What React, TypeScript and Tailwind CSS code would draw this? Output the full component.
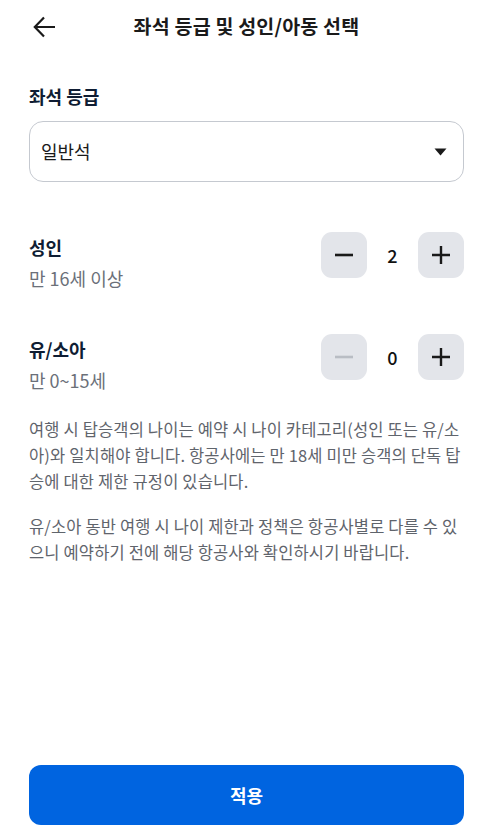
import { useState } from "react";

const font = { fontFamily: '"Noto Sans CJK KR", "Noto Sans", sans-serif' };

function Stepper({ value, min, onChange }: { value: number; min: number; onChange: (v: number) => void }) {
  const disabled = value <= min;
  return (
    <div className="flex items-center">
      <button
        type="button"
        onClick={() => !disabled && onChange(value - 1)}
        className="flex h-[46px] w-[46px] items-center justify-center rounded-[11px] bg-[#e3e5ea]"
      >
        <svg width="20" height="20" viewBox="0 0 20 20">
          <path d="M1 10h18" stroke={disabled ? "#b9bdc4" : "#1a1a1a"} strokeWidth="2.6" />
        </svg>
      </button>
      <span className="w-[51px] text-center text-[18px] font-medium text-[#111]">{value}</span>
      <button
        type="button"
        onClick={() => onChange(value + 1)}
        className="flex h-[46px] w-[46px] items-center justify-center rounded-[11px] bg-[#e3e5ea]"
      >
        <svg width="20" height="20" viewBox="0 0 20 20">
          <path d="M1 10h18M10 1v18" stroke="#1a1a1a" strokeWidth="2.4" />
        </svg>
      </button>
    </div>
  );
}

export default function App() {
  const [adults, setAdults] = useState(2);
  const [kids, setKids] = useState(0);

  return (
    <div className="flex h-[832px] w-[493px] flex-col bg-white" style={font}>
      <header className="relative flex h-[54px] items-center justify-center">
        <button type="button" className="absolute left-[33px] top-[16px]">
          <svg width="23" height="22" viewBox="0 0 23 22" fill="none">
            <path d="M22 11H2M11 1.5L1.8 11l9.2 9.5" stroke="#1a1a1a" strokeWidth="2.2" />
          </svg>
        </button>
        <h1 className="mt-[-2px] text-[19.5px] font-bold tracking-[0.2px] text-[#1a1a1a]">좌석 등급 및 성인/아동 선택</h1>
      </header>

      <main className="flex flex-1 flex-col px-[29px]">
        <h2 className="mt-[28px] text-[18px] font-bold leading-[28px] text-[#0f1d33]">좌석 등급</h2>
        <div className="mt-[11px] flex h-[61px] items-center justify-between rounded-[14px] border border-[#c5c9d0] pl-[11px] pr-[16px]">
          <span className="text-[18px] text-[#1a1a1a]">일반석</span>
          <svg width="13" height="8" viewBox="0 0 13 8">
            <path d="M0.5 0.5h12L6.5 7.5z" fill="#1a1a1a" />
          </svg>
        </div>

        <div className="mt-[51px] flex items-start justify-between">
          <div>
            <div className="text-[18px] font-bold leading-[28px] text-[#0f1d33]">성인</div>
            <div className="mt-[4px] text-[18px] leading-[26px] text-[#6b7079]">만 16세 이상</div>
          </div>
          <div className="mt-[-1px]">
            <Stepper value={adults} min={1} onChange={setAdults} />
          </div>
        </div>

        <div className="mt-[44px] flex items-start justify-between">
          <div>
            <div className="text-[18px] font-bold leading-[28px] text-[#0f1d33]">유/소아</div>
            <div className="mt-[4px] text-[18px] leading-[26px] text-[#6b7079]">만 0~15세</div>
          </div>
          <div className="mt-[-1px]">
            <Stepper value={kids} min={0} onChange={setKids} />
          </div>
        </div>

        <p className="mt-[23px] break-all text-[16.5px] leading-[26px] tracking-[0.15px] text-[#5f646c]">
          여행 시 탑승객의 나이는 예약 시 나이 카테고리(성인 또는 유/소아)와 일치해야 합니다. 항공사에는 만 18세 미만 승객의 단독 탑승에 대한 제한 규정이 있습니다.
        </p>
        <p className="mt-[19px] break-all text-[16.5px] leading-[26px] tracking-[0.15px] text-[#5f646c]">
          유/소아 동반 여행 시 나이 제한과 정책은 항공사별로 다를 수 있으니 예약하기 전에 해당 항공사와 확인하시기 바랍니다.
        </p>
      </main>

      <div className="px-[29px] pb-[7px]">
        <button
          type="button"
          className="flex h-[60px] w-full items-center justify-center rounded-[12px] bg-[#0064e0] text-[18px] font-bold text-white"
        >
          적용
        </button>
      </div>
    </div>
  );
}
